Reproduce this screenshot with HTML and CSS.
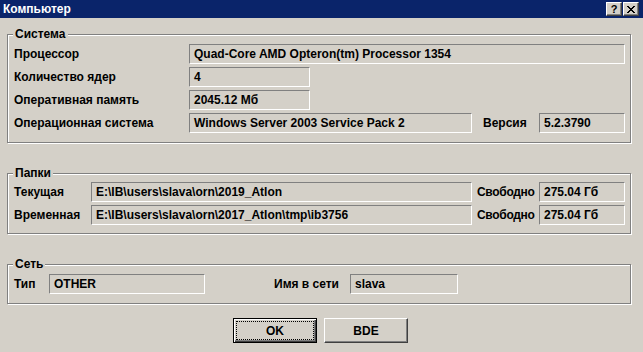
FILE: index.html
```html
<!DOCTYPE html>
<html lang="ru">
<head>
    <meta charset="UTF-8">
    <title>Компьютер</title>
    <link rel="stylesheet" href="styles.css">
</head>
<body>
    <div class="window">
        <div class="titlebar">
            <span class="title">Компьютер</span>
            <div class="title-buttons">
                <span class="tbtn">?</span>
                <span class="tbtn">
                    <svg width="8" height="7" viewBox="0 0 8 7" shape-rendering="crispEdges">
                        <path d="M0 0h2v1H0zM6 0h2v1H6zM1 1h2v1H1zM5 1h2v1H5zM2 2h4v1H2zM3 3h2v1H3zM2 4h4v1H2zM1 5h2v1H1zM5 5h2v1H5zM0 6h2v1H0zM6 6h2v1H6z" fill="#000"/>
                    </svg>
                </span>
            </div>
        </div>

        <!-- Система -->
        <div class="group group-system">
            <span class="legend">Система</span>
            <div class="row">
                <span class="label w-sys">Процессор</span>
                <span class="field f-cpu">Quad-Core AMD Opteron(tm) Processor 1354</span>
            </div>
            <div class="row">
                <span class="label w-sys">Количество ядер</span>
                <span class="field f-small">4</span>
            </div>
            <div class="row">
                <span class="label w-sys">Оперативная память</span>
                <span class="field f-small">2045.12 Мб</span>
            </div>
            <div class="row">
                <span class="label w-sys">Операционная система</span>
                <span class="field f-os">Windows Server 2003 Service Pack 2</span>
                <span class="label w-ver">Версия</span>
                <span class="field f-right">5.2.3790</span>
            </div>
        </div>

        <!-- Папки -->
        <div class="group group-dirs">
            <span class="legend">Папки</span>
            <div class="row">
                <span class="label w-dir">Текущая</span>
                <span class="field f-path">E:\IB\users\slava\orn\2019_Atlon</span>
                <span class="label w-free">Свободно</span>
                <span class="field f-right">275.04 Гб</span>
            </div>
            <div class="row">
                <span class="label w-dir">Временная</span>
                <span class="field f-path">E:\IB\users\slava\orn\2017_Atlon\tmp\ib3756</span>
                <span class="label w-free">Свободно</span>
                <span class="field f-right">275.04 Гб</span>
            </div>
        </div>

        <!-- Сеть -->
        <div class="group group-net">
            <span class="legend">Сеть</span>
            <div class="row">
                <span class="label w-type">Тип</span>
                <span class="field f-type">OTHER</span>
                <span class="label w-host">Имя в сети</span>
                <span class="field f-host">slava</span>
            </div>
        </div>

        <div class="buttons">
            <button class="btn btn-default">OK</button>
            <button class="btn">BDE</button>
        </div>
    </div>
</body>
</html>
```

FILE: styles.css
```css
/* Base */
body {
    margin: 0;
    background-color: #d4d0c8;
    font-family: "Liberation Sans", Arial, sans-serif;
    font-size: 12px;
    font-weight: bold;
    color: #000;
}

.window {
    width: 643px;
    height: 352px;
    overflow: hidden;
}

/* Title bar */
.titlebar {
    height: 18px;
    background-color: #0a246a;
    display: flex;
    align-items: center;
    justify-content: space-between;
    padding: 0 4px 0 3px;
}

.title {
    color: #fff;
    line-height: 18px;
}

.title-buttons {
    display: flex;
    gap: 1px;
}

.tbtn {
    box-sizing: border-box;
    width: 16px;
    height: 14px;
    display: flex;
    align-items: center;
    justify-content: center;
    background-color: #d4d0c8;
    border: 1px solid;
    border-color: #fff #404040 #404040 #fff;
    box-shadow: inset -1px -1px 0 #808080;
    font-size: 11px;
    line-height: 12px;
}

/* Group boxes */
.group {
    position: relative;
    box-sizing: border-box;
    width: 624px;
    margin-left: 7px;
    border: 1px solid #808080;
    box-shadow: inset 1px 1px 0 #fff, 1px 1px 0 #fff;
    padding: 9px 5px 9px 6px;
}

.group-system {
    margin-top: 16px;
}

.group-dirs {
    margin-top: 30px;
    padding-top: 8px;
    padding-bottom: 8px;
}

.group-net {
    margin-top: 30px;
}

.legend {
    position: absolute;
    top: -8px;
    left: 5px;
    padding: 0 2px;
    background-color: #d4d0c8;
    line-height: 14px;
}

.row {
    display: flex;
    align-items: center;
    height: 20px;
}

.row + .row {
    margin-top: 3px;
}

.label {
    flex: none;
    white-space: nowrap;
}

.w-sys { width: 175px; }
.w-ver { width: 56px; margin-left: 11px; }
.w-dir { width: 77px; }
.w-free { width: 62px; margin-left: 5px; letter-spacing: -0.3px; }
.w-type { width: 35px; }
.w-host { width: 76px; margin-left: 69px; }

/* Read-only fields */
.field {
    flex: none;
    box-sizing: border-box;
    height: 20px;
    line-height: 18px;
    padding-left: 4px;
    border: 1px solid;
    border-color: #808080 #fff #fff #808080;
    white-space: nowrap;
    overflow: hidden;
}

.f-cpu { width: 436px; }
.f-small { width: 121px; }
.f-os { width: 283px; }
.f-right { width: 86px; }
.f-path { width: 381px; }
.f-type { width: 156px; }
.f-host { width: 108px; }

/* Dialog buttons */
.buttons {
    display: flex;
    gap: 7px;
    margin-top: 14px;
    padding-left: 233px;
}

.btn {
    box-sizing: border-box;
    width: 84px;
    height: 25px;
    padding: 0;
    background-color: #d4d0c8;
    border: 1px solid;
    border-color: #fff #404040 #404040 #fff;
    box-shadow: inset -1px -1px 0 #808080;
    font-family: inherit;
    font-size: 12px;
    font-weight: bold;
    color: #000;
}

.btn-default {
    border-color: #000;
    box-shadow: inset 1px 1px 0 #fff, inset -1px -1px 0 #404040, inset -2px -2px 0 #808080;
    outline: 1px dotted #000;
    outline-offset: -4px;
}
```
